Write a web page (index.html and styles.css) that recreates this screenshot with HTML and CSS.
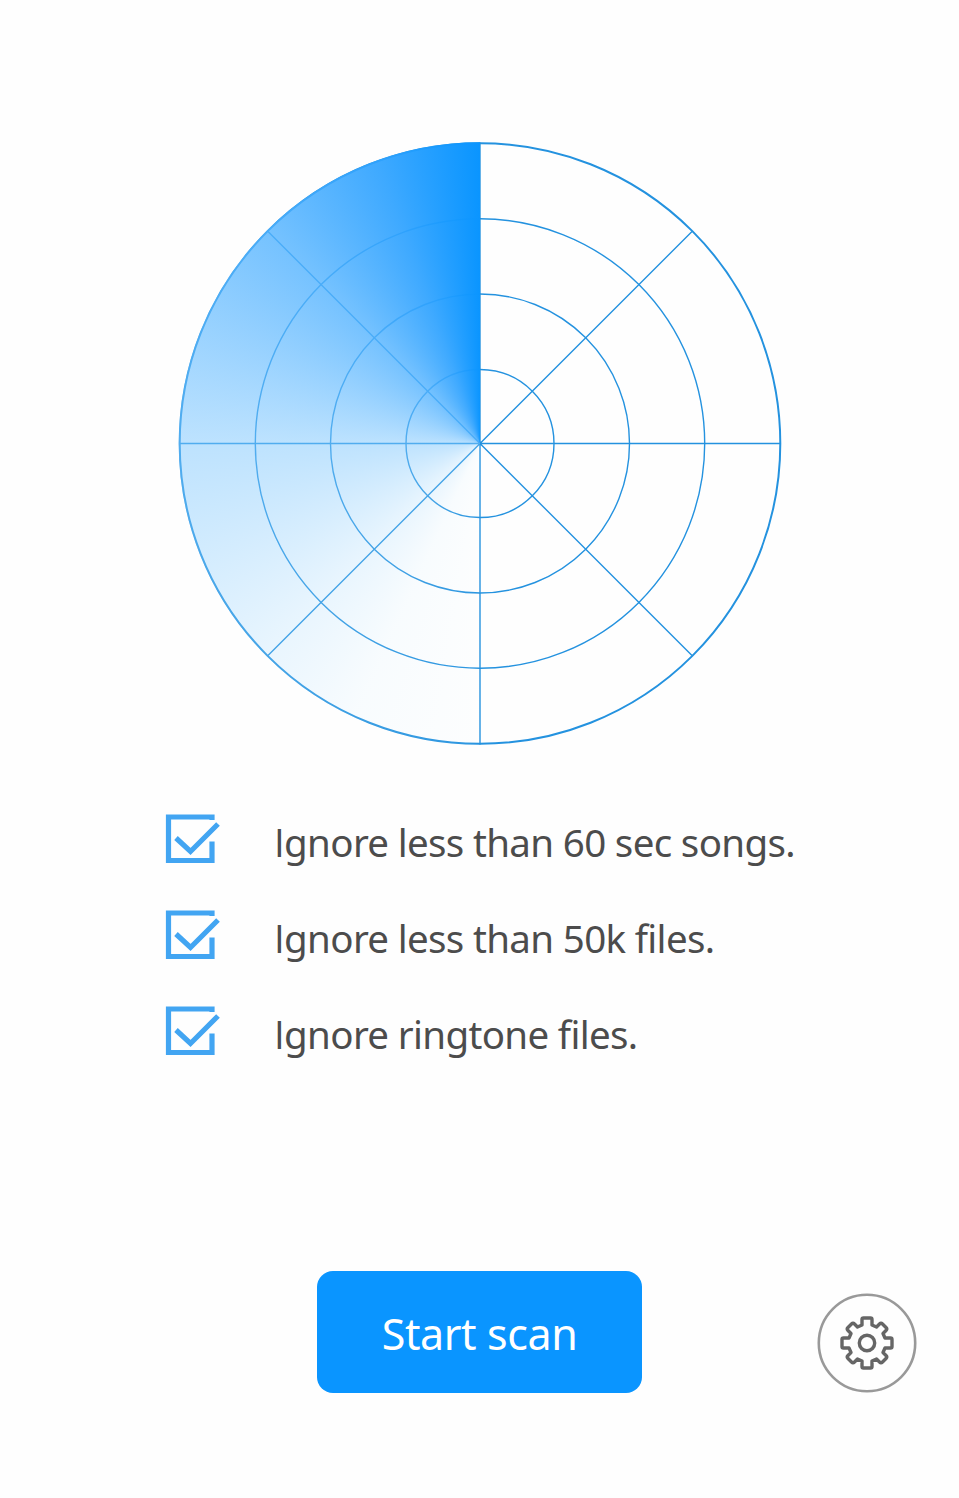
FILE: index.html
```html
<!DOCTYPE html>
<html lang="en">
<head>
<meta charset="utf-8">
<title>Scan music</title>
<link rel="stylesheet" href="styles.css">
</head>
<body>
<main class="screen">
  <div class="radar">
    <svg class="grid" viewBox="0 0 604 604" fill="none" stroke="#2492df" stroke-width="1.4">
      <circle cx="302" cy="302" r="300.3" stroke-width="2"/>
      <circle cx="302" cy="302" r="224.7"/>
      <circle cx="302" cy="302" r="149.5"/>
      <circle cx="302" cy="302" r="74"/>
      <path d="M1 302H603M302 1V603M90 90L514 514M90 514L514 90"/>
    </svg>
    <div class="sweep"></div>
  </div>
  <ul class="options">
    <li class="option"><svg class="check" viewBox="0 0 58 52"><path d="M48 7V4H4.500V47.500H48V28.500M12 25L26.500 38.500L54 11"/></svg><span class="label"><span class="initial">I</span>gnore less than 60 sec songs.</span></li>
    <li class="option"><svg class="check" viewBox="0 0 58 52"><path d="M48 7V4H4.500V47.500H48V28.500M12 25L26.500 38.500L54 11"/></svg><span class="label"><span class="initial">I</span>gnore less than 50k files.</span></li>
    <li class="option"><svg class="check" viewBox="0 0 58 52"><path d="M48 7V4H4.500V47.500H48V28.500M12 25L26.500 38.500L54 11"/></svg><span class="label"><span class="initial">I</span>gnore ringtone files.</span></li>
  </ul>
  <footer class="actions">
    <button class="start">Start scan</button>
    <button class="settings" aria-label="Settings">
      <svg viewBox="-50 -50 100 100" fill="none">
        <circle r="48.200" stroke="#999" stroke-width="2.600"/>
        <g stroke="#666" stroke-width="3.400" stroke-linejoin="round">
          <circle r="7.700"/>
          <path d="M-3.500 -25H3.500Q5 -25 5 -23.500V-18L9.500 -16L12.500 -19Q14 -20.500 15.500 -19L19 -15.500Q20.500 -14 19 -12.500L16 -9.500L18 -5H23.500Q25 -5 25 -3.500V3.500Q25 5 23.500 5H18L16 9.500L19 12.500Q20.500 14 19 15.500L15.500 19Q14 20.500 12.500 19L9.500 16L5 18V23.500Q5 25 3.500 25H-3.500Q-5 25 -5 23.500V18L-9.500 16L-12.500 19Q-14 20.500 -15.500 19L-19 15.500Q-20.500 14 -19 12.500L-16 9.500L-18 5H-23.500Q-25 5 -25 3.500V-3.500Q-25 -5 -23.500 -5H-18L-16 -9.500L-19 -12.500Q-20.500 -14 -19 -15.500L-15.500 -19Q-14 -20.500 -12.500 -19L-9.500 -16L-5 -18V-23.500Q-5 -25 -3.500 -25Z"/>
        </g>
      </svg>
    </button>
  </footer>
</main>
</body>
</html>
```
FILE: styles.css
```css
* { box-sizing: border-box; }
body { margin: 0; background: #fefefe; font-family: "Noto Sans", sans-serif; }
.screen { width: 959px; height: 1498px; padding-top: 141px; display: flex; flex-direction: column; }
.radar { width: 604px; height: 604px; margin-left: 178px; display: grid; flex: none; }
.grid, .sweep { grid-area: 1 / 1; width: 604px; height: 604px; }
.grid { transform: translateY(.5px); }
.sweep {
  clip-path: circle(301.300px at 302px 302.500px);
  background: conic-gradient(from 0deg at 302px 302.500px, transparent 180deg, rgba(220,242,255,.05) 182deg, rgba(210,238,255,.14) 205deg, rgba(171,220,255,.25) 225deg, rgba(125,199,255,.5) 270deg, rgba(83,179,255,.8) 315deg, rgba(48,163,255,.93) 340deg, #0a95ff 360deg);
}
.options { list-style: none; margin: 50px 0 0 164px; padding: 0; flex: none; }
.option { height: 96px; display: flex; align-items: center; }
.check { width: 58px; height: 52px; margin: -9px 52px 0 0; fill: none; stroke: #42a5f2; stroke-width: 5.200; }
.label { margin-top: -2px; font-size: 38.500px; line-height: 52px; color: #4c4c4c; letter-spacing: -.66px; white-space: nowrap; }
.initial { font-family: "Open Sans", sans-serif; }
.actions { display: grid; grid-template-columns: 1fr 325px 1fr; margin-top: 188px; align-items: center; }
button { padding: 0; border: 0; background: none; font: inherit; }
.start { grid-column: 2; height: 122px; border-radius: 16px; background: #0a95ff; color: #fff; font-size: 43px; padding-top: 2px; letter-spacing: -.4px; }
.settings { justify-self: end; width: 100px; height: 100px; margin: 21px 42px 0 0; }
.settings svg { display: block; width: 100px; height: 100px; }
```
